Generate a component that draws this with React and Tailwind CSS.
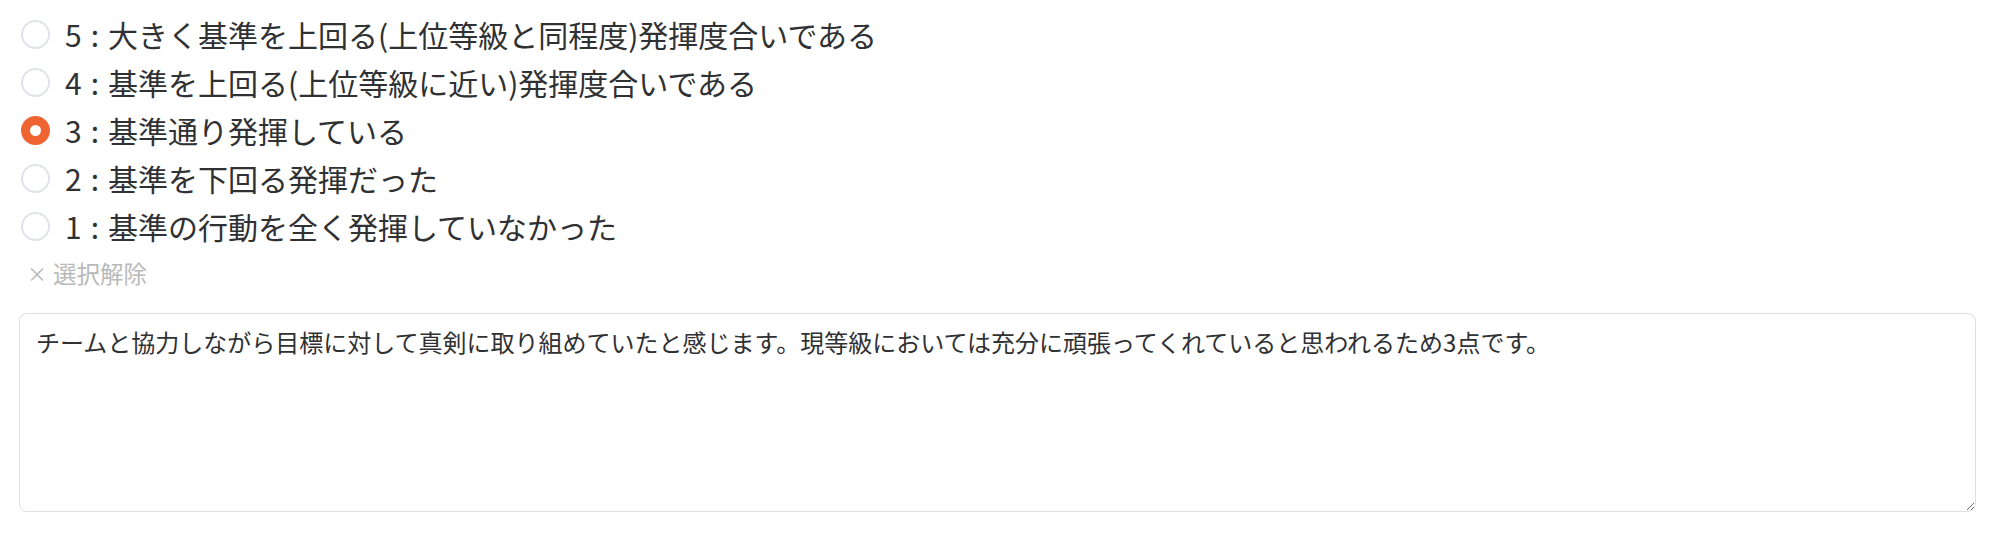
import React, { useState } from "react";

const options = [
  { value: 5, label: "大きく基準を上回る(上位等級と同程度)発揮度合いである" },
  { value: 4, label: "基準を上回る(上位等級に近い)発揮度合いである" },
  { value: 3, label: "基準通り発揮している" },
  { value: 2, label: "基準を下回る発揮だった" },
  { value: 1, label: "基準の行動を全く発揮していなかった" },
];

const App = () => {
  const [selected, setSelected] = useState(3);
  return (
    <div className="bg-white pl-[19px] pr-[23px] pt-[10px] pb-[23px] font-['Noto_Sans_CJK_JP','Noto_Sans',sans-serif] text-[#303133]">
      {/* RADIO LIST */}
      {options.map((o) => (
        <div
          key={o.value}
          onClick={() => setSelected(o.value)}
          className="h-[48px] flex items-center gap-[15px] cursor-pointer"
        >
          {selected === o.value ? (
            <span className="ml-[2px] w-[29px] h-[29px] rounded-full bg-[#ef6430] flex items-center justify-center">
              <span className="w-[11px] h-[11px] rounded-full bg-white" />
            </span>
          ) : (
            <span className="ml-[2px] w-[29px] h-[29px] rounded-full border-2 border-[#e0e3e9] bg-white" />
          )}
          <span className="text-[30px] leading-none">
            {o.value}
            <span className="mx-[9px]">:</span>
            {o.label}
          </span>
        </div>
      ))}

      {/* CLEAR */}
      <div
        onClick={() => setSelected(null)}
        className="h-[48px] flex items-center pl-[8px] text-[#b9b9b9] text-[23.5px] cursor-pointer"
      >
        <span className="text-[20px] mr-[6px]">×</span>
        <span>選択解除</span>
      </div>

      {/* COMMENT */}
      <textarea
        className="mt-[15px] block w-full h-[199px] border border-[#dcdfe6] rounded-[8px] px-[16px] py-[10px] text-[24px] leading-[1.5] text-[#303133] outline-none"
        defaultValue="チームと協力しながら目標に対して真剣に取り組めていたと感じます。現等級においては充分に頑張ってくれていると思われるため3点です。"
      />
    </div>
  );
};

export default App;
